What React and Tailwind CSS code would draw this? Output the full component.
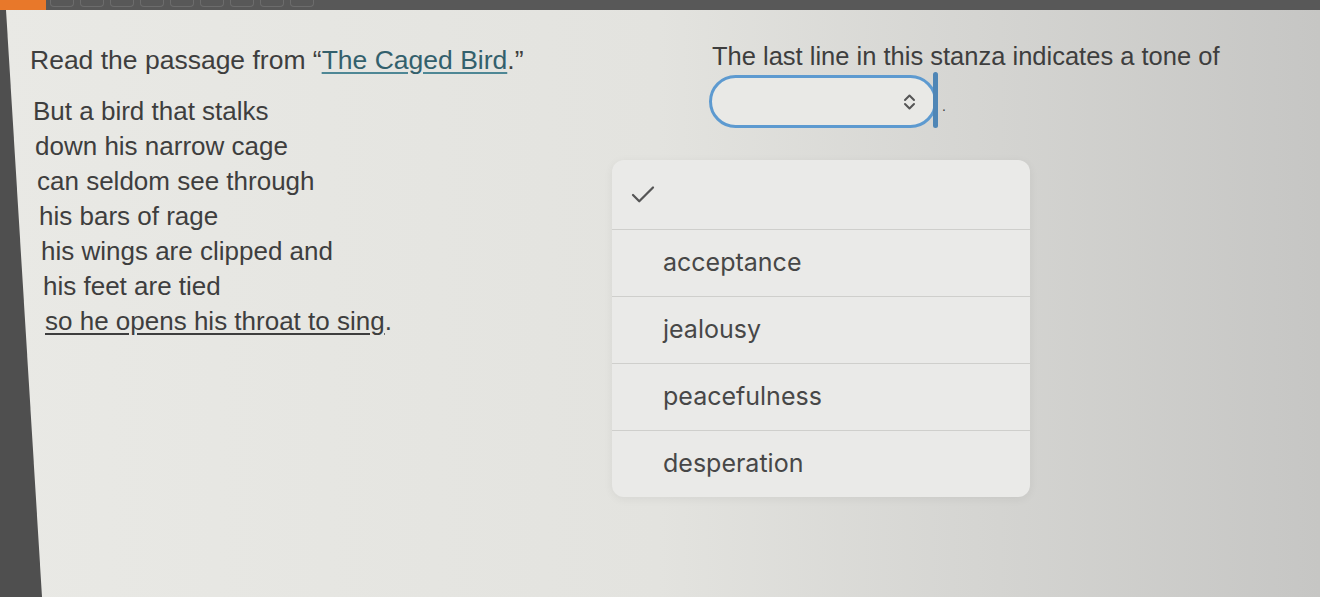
import React from "react";
import { Check } from "lucide-react";

const poem = [
  { text: "But a bird that stalks", pad: "pl-[3px]" },
  { text: "down his narrow cage", pad: "pl-[5px]" },
  { text: "can seldom see through", pad: "pl-[7px]" },
  { text: "his bars of rage", pad: "pl-[9px]" },
  { text: "his wings are clipped and", pad: "pl-[11px]" },
  { text: "his feet are tied", pad: "pl-[13px]" },
];

const options = ["acceptance", "jealousy", "peacefulness", "desperation"];

const App = () => {
  return (
    <div className="w-[1320px] h-[597px] flex flex-col overflow-hidden bg-gradient-to-r from-[#e9e9e5] via-[#e3e3df] to-[#c6c6c4] text-[#3e3e3e] font-['Liberation_Sans',Arial,sans-serif]">
      {/* top bar */}
      <div className="h-[10px] flex bg-[#585858]">
        <div className="w-[46px] bg-[#e8782a]" />
        <div className="flex gap-[6px] pl-[4px]">
          {[0, 1, 2, 3, 4, 5, 6, 7, 8].map((i) => (
            <div key={i} className="w-[24px] h-[7px] rounded-b border border-t-0 border-[#6c6c6c]" />
          ))}
        </div>
      </div>

      <div className="flex-1 relative">
        {/* left screen edge */}
        <div className="absolute left-0 top-0 bottom-0 w-[42px] bg-[#4f4f4f] [clip-path:polygon(0_0,6px_0,42px_100%,0_100%)]" />

        <div className="flex">
          {/* passage */}
          <div className="w-[709px] pl-[30px] pt-[35px]">
            <p className="text-[26.5px] leading-[30px]">
              Read the passage from “
              <span className="underline underline-offset-[3px] text-[#33606c] decoration-[#4e8795]">The Caged Bird</span>
              .”
            </p>
            <div className="mt-[19px] text-[26px] leading-[35px]">
              {poem.map((line) => (
                <div key={line.text} className={line.pad}>
                  {line.text}
                </div>
              ))}
              <div className="pl-[15px]">
                <span className="underline underline-offset-[3px]">so he opens his throat to sing</span>.
              </div>
            </div>
          </div>

          {/* question */}
          <div className="pt-[31px]">
            <p className="text-[25.5px] leading-[30px] pl-[3px]">The last line in this stanza indicates a tone of</p>
            <div className="flex items-end mt-[1px]">
              <div className="w-[228px] h-[53px] rounded-full border-[3px] border-[#5d9ad0] bg-[#e9e9e6] flex items-center justify-end pr-[18px]">
                <svg width="13" height="18" viewBox="0 0 13 18" fill="none" stroke="#555" strokeWidth="2" strokeLinecap="round" strokeLinejoin="round">
                  <path d="M2 7 L6.5 2.5 L11 7" />
                  <path d="M2 11 L6.5 15.5 L11 11" />
                </svg>
              </div>
              <div className="w-[5px] h-[56px] -ml-[4px] bg-[#4f86b6] rounded" />
              <span className="text-[14px] leading-[20px] ml-[4px] mb-[12px]">.</span>
            </div>
          </div>
        </div>

        {/* open dropdown menu */}
        <div className="absolute left-[612px] top-[150px] w-[418px] rounded-[12px] bg-[#eaeae8] shadow-[0_2px_10px_rgba(0,0,0,0.06)] font-['Inter',sans-serif] text-[25px] text-[#474747]">
          <div className="h-[70px] flex items-center pl-[16px] border-b border-[#cfcfcc]">
            <Check size={30} strokeWidth={1.8} className="text-[#555]" />
          </div>
          {options.map((opt, i) => (
            <div
              key={opt}
              className={i < options.length - 1 ? "h-[67px] flex items-center pl-[51px] border-b border-[#cfcfcc]" : "h-[66px] flex items-center pl-[51px]"}
            >
              {opt}
            </div>
          ))}
        </div>
      </div>
    </div>
  );
};

export default App;
